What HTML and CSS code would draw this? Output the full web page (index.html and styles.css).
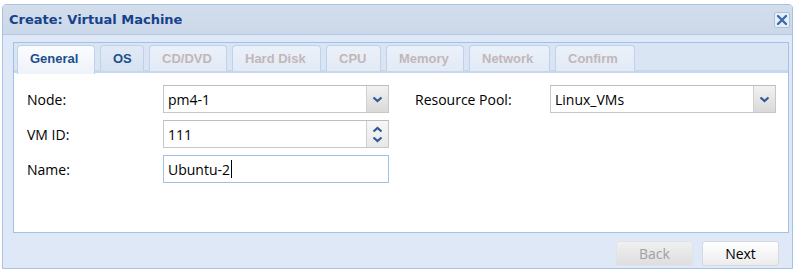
FILE: index.html
```html
<!DOCTYPE html>
<html lang="en">
<head>
  <meta charset="UTF-8">
  <title>Create: Virtual Machine</title>
  <link rel="stylesheet" href="styles.css">
</head>
<body>

<div class="window">
  <div class="header">
    <span class="title">Create: Virtual Machine</span>
    <span class="close">
      <svg width="12" height="12" viewBox="0 0 12 12"><path d="M2 2 L10 10 M10 2 L2 10" stroke="#3d6aa8" stroke-width="2.4" stroke-linecap="round"/></svg>
    </span>
  </div>

  <div class="content">
    <div class="tabpanel">
      <div class="tabstrip">
        <span class="tab active">General</span>
        <span class="tab">OS</span>
        <span class="tab disabled">CD/DVD</span>
        <span class="tab disabled">Hard Disk</span>
        <span class="tab disabled">CPU</span>
        <span class="tab disabled">Memory</span>
        <span class="tab disabled">Network</span>
        <span class="tab disabled">Confirm</span>
      </div>
      <div class="tabbody">
        <div class="column">
          <div class="row">
            <label>Node:</label>
            <div class="field combo">
              <span class="value">pm4-1</span>
              <span class="trigger">
                <svg width="11" height="7" viewBox="0 0 11 7"><path d="M1.5 1.5 L5.5 5 L9.5 1.5" fill="none" stroke="#2c5a96" stroke-width="2.2"/></svg>
              </span>
            </div>
          </div>
          <div class="row">
            <label>VM ID:</label>
            <div class="field spinner">
              <span class="value">111</span>
              <span class="spin">
                <svg width="11" height="7" viewBox="0 0 11 7"><path d="M1.5 5.5 L5.5 2 L9.5 5.5" fill="none" stroke="#2c5a96" stroke-width="2.2"/></svg>
                <svg width="11" height="7" viewBox="0 0 11 7"><path d="M1.5 1.5 L5.5 5 L9.5 1.5" fill="none" stroke="#2c5a96" stroke-width="2.2"/></svg>
              </span>
            </div>
          </div>
          <div class="row">
            <label>Name:</label>
            <div class="field text focus">
              <span class="value">Ubuntu-2</span><span class="caret"></span>
            </div>
          </div>
        </div>
        <div class="column right">
          <div class="row">
            <label>Resource Pool:</label>
            <div class="field combo">
              <span class="value">Linux_VMs</span>
              <span class="trigger">
                <svg width="11" height="7" viewBox="0 0 11 7"><path d="M1.5 1.5 L5.5 5 L9.5 1.5" fill="none" stroke="#2c5a96" stroke-width="2.2"/></svg>
              </span>
            </div>
          </div>
        </div>
      </div>
    </div>

    <div class="footer">
      <button class="btn disabled">Back</button>
      <button class="btn">Next</button>
    </div>
  </div>
</div>

</body>
</html>
```

FILE: styles.css
```css
body {
  margin: 0;
  background: #fff;
  font-family: 'Open Sans', sans-serif;
  font-size: 14px;
  color: #000;
}
.window {
  margin: 4px 7px 0 2px;
  width: 789px;
  height: 263px;
  border: 1px solid #a9c2e2;
  border-radius: 4px 4px 0 0;
  background: #dfe8f6;
  display: flex;
  flex-direction: column;
}
.header {
  height: 29px;
  background: linear-gradient(#d3deec, #cbd8e9);
  border-bottom: 1px solid #b4c8e4;
  display: flex;
  align-items: center;
  justify-content: space-between;
  padding: 0 2px 0 6px;
}
.title {
  font-family: 'DejaVu Sans', sans-serif;
  font-weight: bold;
  font-size: 13px;
  color: #15428b;
}
.close {
  width: 14px;
  height: 14px;
  border: 1px solid #a9c2e2;
  border-radius: 2px;
  background: #e8eff8;
  display: flex;
  align-items: center;
  justify-content: center;
  margin-top: 1px;
}
.content {
  flex: 1;
  padding: 7px 3px 0 10px;
  display: flex;
  flex-direction: column;
}
.tabpanel {
  border: 1px solid #a4c0e4;
  display: flex;
  flex-direction: column;
  height: 189px;
}
.tabstrip {
  background: #dae5f4;
  padding: 2px 0 0 3px;
  display: flex;
  gap: 5px;
  border-bottom: 3px solid #c6d8ef;
  height: 25px;
}
.tab {
  font-family: 'Liberation Sans', sans-serif;
  font-weight: bold;
  font-size: 13px;
  color: #c2b7b7;
  background: linear-gradient(#ebf1f9, #e2eaf6);
  border: 1px solid #bfd2ea;
  border-bottom: none;
  border-radius: 4px 4px 0 0;
  padding: 0 12px;
  display: flex;
  align-items: center;
  height: 25px;
}
.tab:nth-child(1) { width: 52px; }
.tab:nth-child(2) { width: 18px; }
.tab:nth-child(3) { width: 52px; }
.tab:nth-child(4) { width: 63px; }
.tab:nth-child(5) { width: 29px; }
.tab:nth-child(6) { width: 52px; }
.tab:nth-child(7) { width: 55px; }
.tab:nth-child(8) { width: 54px; }
.tab.active {
  color: #1e4e8c;
  background: linear-gradient(#fafcfe, #eef3fa);
  padding-bottom: 3px;
  position: relative;
  z-index: 1;
}
.tab:nth-child(2) {
  color: #1e4e8c;
  background: linear-gradient(#e2eaf6, #d6e2f2);
}
.tabbody {
  flex: 1;
  background: #fff;
  padding: 12px 14px 0 13px;
  display: flex;
}
.column {
  display: flex;
  flex-direction: column;
  gap: 7px;
}
.column.right {
  margin-left: 26px;
}
.row {
  display: flex;
  align-items: center;
}
.row label {
  width: 136px;
}
.right .row label {
  width: 135px;
}
.field {
  width: 224px;
  height: 26px;
  border: 1px solid #c7c7c7;
  border-top-color: #bdbdbd;
  background: #fff;
  display: flex;
  align-items: center;
  box-sizing: content-box;
}
.field .value {
  padding-left: 4px;
  flex: 1;
}
.field.text .value {
  flex: none;
}
.trigger {
  width: 21px;
  height: 26px;
  border-left: 1px solid #d0d0d0;
  background: linear-gradient(#f2f2f2, #d9d9d9);
  display: flex;
  align-items: center;
  justify-content: center;
}
.spin {
  width: 21px;
  height: 26px;
  border-left: 1px solid #d0d0d0;
  background: linear-gradient(#f7f7f7, #e8e8e8);
  display: flex;
  flex-direction: column;
  align-items: center;
  justify-content: center;
  gap: 3px;
}
.field.focus {
  border-color: #9fc1e6;
}
.caret {
  width: 1px;
  height: 18px;
  background: #000;
  margin-left: 1px;
}
.footer {
  display: flex;
  justify-content: flex-end;
  gap: 9px;
  padding: 8px 10px 0 0;
}
.btn {
  width: 77px;
  height: 25px;
  font-family: 'Open Sans', sans-serif;
  font-size: 14px;
  color: #000;
  border: 1px solid #d5d9de;
  border-radius: 3px;
  background: linear-gradient(#ffffff, #ececec);
  padding: 0;
}
.btn.disabled {
  color: #a0a0a0;
  background: linear-gradient(#f0f0f0, #dedede);
  border-color: #e0e3e7;
}
```
